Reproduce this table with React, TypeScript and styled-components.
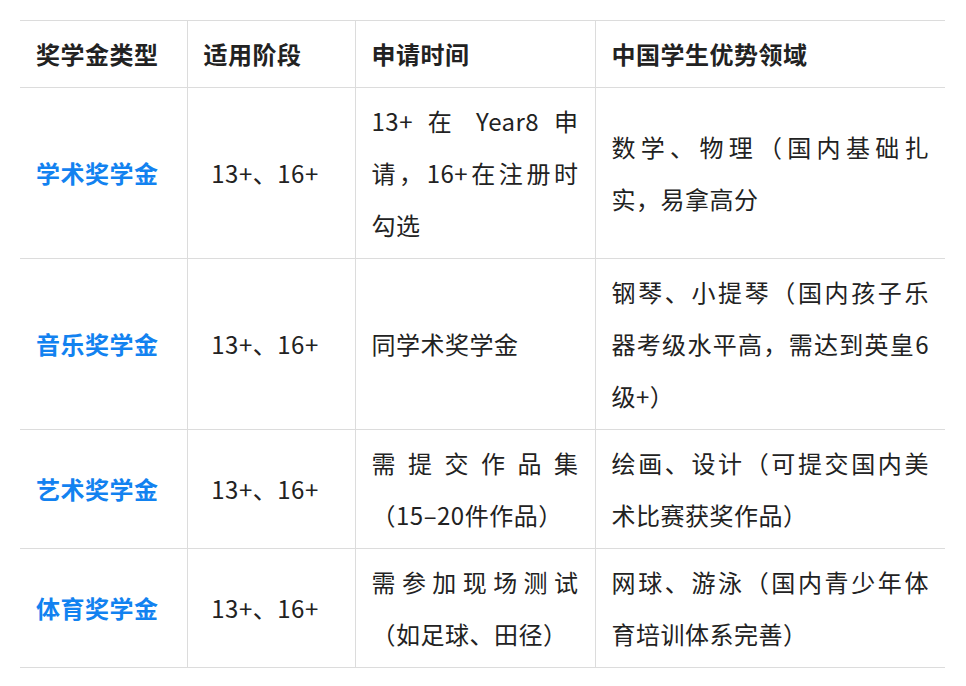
import React from 'react'
import styled, { createGlobalStyle } from 'styled-components'

const GlobalStyle = createGlobalStyle`
  html, body {
    margin: 0;
    padding: 0;
    background: #fff;
  }
  body {
    font-family: "Noto Sans CJK SC", "Noto Sans", sans-serif;
    color: #222;
  }
`

interface Row {
  type: string
  stage: string
  time: string
  strength: string
}

const rows: Row[] = [
  {
    type: '学术奖学金',
    stage: '13+、16+',
    time: '13+ 在 Year8 申请，16+在注册时勾选',
    strength: '数学、物理（国内基础扎实，易拿高分',
  },
  {
    type: '音乐奖学金',
    stage: '13+、16+',
    time: '同学术奖学金',
    strength: '钢琴、小提琴（国内孩子乐器考级水平高，需达到英皇6级+）',
  },
  {
    type: '艺术奖学金',
    stage: '13+、16+',
    time: '需提交作品集（15–20件作品）',
    strength: '绘画、设计（可提交国内美术比赛获奖作品）',
  },
  {
    type: '体育奖学金',
    stage: '13+、16+',
    time: '需参加现场测试（如足球、田径）',
    strength: '网球、游泳（国内青少年体育培训体系完善）',
  },
]

const App = () => {
  return (
    <>
      <GlobalStyle />
      <Page>
        <Table>
          <colgroup>
            <col style={{ width: 167 }} />
            <col style={{ width: 168 }} />
            <col style={{ width: 240 }} />
            <col style={{ width: 350 }} />
          </colgroup>
          <thead>
            <tr>
              <Th>奖学金类型</Th>
              <Th>适用阶段</Th>
              <Th>申请时间</Th>
              <Th>中国学生优势领域</Th>
            </tr>
          </thead>
          <tbody>
            {rows.map(r => (
              <tr key={r.type}>
                <TypeCell>{r.type}</TypeCell>
                <StageCell>{r.stage}</StageCell>
                <Td>{r.time}</Td>
                <Td>{r.strength}</Td>
              </tr>
            ))}
          </tbody>
        </Table>
      </Page>
    </>
  )
}

export default App

const Page = styled.div`
  padding: 20px 21px 20px 20px;
`

const Table = styled.table`
  width: 925px;
  border-collapse: collapse;
  table-layout: fixed;
  font-size: 24px;
  letter-spacing: 0.5px;
  line-height: 52px;
`

const Th = styled.th`
  text-align: left;
  font-weight: 700;
  padding: 7px 16px;
  border-top: 1px solid #dcdcdc;
  border-bottom: 1px solid #dcdcdc;
  border-left: 1px solid #dcdcdc;
  &:first-child {
    border-left: none;
  }
`

const Td = styled.td`
  text-align: justify;
  vertical-align: middle;
  padding: 7px 16px;
  border-bottom: 1px solid #dcdcdc;
  border-left: 1px solid #dcdcdc;
`

const StageCell = styled(Td)`
  text-align: center;
  padding: 7px 22px 7px 10px;
`

const TypeCell = styled.td`
  color: #1282f0;
  font-weight: 700;
  vertical-align: middle;
  padding: 7px 16px;
  border-bottom: 1px solid #dcdcdc;
`
